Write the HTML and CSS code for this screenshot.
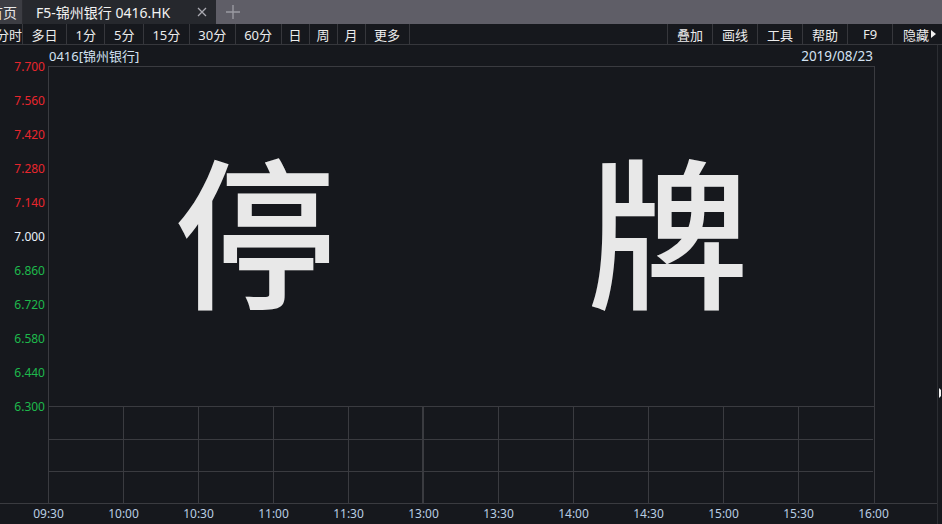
FILE: index.html
```html
<!DOCTYPE html>
<html lang="zh-CN">
<head>
	<meta charset="UTF-8">
	<title>F5-锦州银行 0416.HK</title>
	<link rel="stylesheet" href="styles.css">
</head>
<body>
	<div class="tabbar">
		<div class="tab tab-home">首页</div>
		<div class="tab tab-active">
			<span>F5-锦州银行 0416.HK</span>
			<svg class="close" width="10" height="10" viewBox="0 0 10 10"><path d="M1 1L9 9M9 1L1 9" stroke="#a9a9b0" stroke-width="1.3"/></svg>
		</div>
		<div class="tab-add">
			<svg width="14" height="14" viewBox="0 0 14 14"><path d="M7 0V14M0 7H14" stroke="#9a9aa2" stroke-width="1.4"/></svg>
		</div>
	</div>

	<div class="toolbar">
		<div class="tools">
			<div class="tool tool-cut">分时</div>
			<div class="tool">多日</div>
			<div class="tool">1分</div>
			<div class="tool">5分</div>
			<div class="tool">15分</div>
			<div class="tool">30分</div>
			<div class="tool">60分</div>
			<div class="tool one">日</div>
			<div class="tool one">周</div>
			<div class="tool one">月</div>
			<div class="tool">更多</div>
		</div>
		<div class="tools tools-right">
			<div class="tool">叠加</div>
			<div class="tool">画线</div>
			<div class="tool">工具</div>
			<div class="tool">帮助</div>
			<div class="tool">F9</div>
			<div class="tool tool-hide">隐藏<i class="arrow"></i></div>
		</div>
	</div>

	<div class="main">
		<div class="chart">
			<div class="chart-head">
				<span>0416[锦州银行]</span>
				<span>2019/08/23</span>
			</div>
			<div class="chart-body">
				<div class="yaxis">
					<div class="up">7.700</div>
					<div class="up">7.560</div>
					<div class="up">7.420</div>
					<div class="up">7.280</div>
					<div class="up">7.140</div>
					<div class="flat">7.000</div>
					<div class="down">6.860</div>
					<div class="down">6.720</div>
					<div class="down">6.580</div>
					<div class="down">6.440</div>
					<div class="down">6.300</div>
				</div>
				<div class="plot">
					<div class="price">
						<span>停</span>
						<span>牌</span>
					</div>
					<div class="volume"></div>
				</div>
			</div>
			<div class="times">
				<span>09:30</span>
				<span>10:00</span>
				<span>10:30</span>
				<span>11:00</span>
				<span>11:30</span>
				<span>13:00</span>
				<span>13:30</span>
				<span>14:00</span>
				<span>14:30</span>
				<span>15:00</span>
				<span>15:30</span>
				<span>16:00</span>
			</div>
		</div>
		<div class="strip"><i class="strip-arrow"></i></div>
	</div>
</body>
</html>
```

FILE: styles.css
```css
html{
	font-family: "Noto Sans", "Noto Sans CJK SC", sans-serif;
}
body{
	margin: 0;
	width: 942px;
	height: 524px;
	overflow: hidden;
	background: #16181d;
	color: #e6e6e6;
}

/* tabs */
.tabbar {
	display: flex;
	height: 24px;
	background: #5f5e67;
}
.tab {
	box-sizing: border-box;
	display: flex;
	align-items: center;
	font-size: 14px;
	white-space: nowrap;
	overflow: hidden;
}
.tab-home {
	width: 23px;
	justify-content: flex-end;
	padding-right: 5px;
	background: #3c3d43;
	border-right: 1px solid #2a2b30;
	color: #e8e8e8;
}
.tab-active {
	width: 193px;
	padding-left: 13px;
	background: #26282d;
	color: #f2f2f2;
}
.tab-active .close {
	margin-left: auto;
	margin-right: 9px;
}
.tab-add {
	width: 33px;
	display: flex;
	justify-content: center;
	align-items: center;
}

/* toolbar */
.toolbar {
	display: flex;
	justify-content: space-between;
	height: 20px;
	border-bottom: 1px solid #36373c;
	font-size: 13px;
	color: #ececec;
	padding-right: 5px;
}
.tools {
	display: flex;
}
.tool {
	display: flex;
	align-items: center;
	justify-content: center;
	padding: 0 8.5px;
	border-right: 1px solid #36373c;
	white-space: nowrap;
}
.tool.one {
	padding: 0 7px;
}
.tool-cut {
	width: 22px;
	padding: 0;
	justify-content: flex-end;
	overflow: hidden;
}
.tools-right .tool {
	width: 44px;
	padding: 0;
	border-right: 0;
	border-left: 1px solid #36373c;
}
.tool-hide {
	justify-content: flex-end !important;
}
.arrow {
	width: 0;
	height: 0;
	margin: 0 1px 0 2px;
	border-top: 4px solid transparent;
	border-bottom: 4px solid transparent;
	border-left: 5px solid #f0f0f0;
}

/* chart */
.main {
	display: flex;
	height: 479px;
}
.chart {
	width: 937px;
	display: flex;
	flex-flow: column nowrap;
}
.chart-head {
	height: 21px;
	display: flex;
	justify-content: space-between;
	align-items: center;
	padding: 0 64px 0 49px;
	font-size: 13px;
	color: #d3e2f2;
}
.chart-head span:last-child {
	font-size: 13.5px;
}
.chart-body {
	display: flex;
	height: 437px;
}
.yaxis {
	width: 45px;
	padding-right: 3px;
	margin-top: -16px;
	font-size: 12px;
	text-align: right;
}
.yaxis div {
	height: 34px;
	line-height: 34px;
}
.up { color: #e8262d; }
.flat { color: #e9f1fb; }
.down { color: #1eb84c; }

.plot {
	width: 825px;
	border: 1px solid #3a3b40;
	border-bottom: 0;
	display: flex;
	flex-flow: column nowrap;
}
.price {
	box-sizing: border-box;
	height: 339px;
	padding-bottom: 20px;
	display: flex;
	justify-content: center;
	align-items: center;
	gap: 251px;
	font-family: "Noto Sans CJK SC", sans-serif;
	font-size: 162px;
	font-weight: 500;
	line-height: 1;
	color: #e8e8e8;
}
.volume {
	height: 96px;
	border-top: 1px solid #3a3b40;
	background-image:
		linear-gradient(to right, transparent 373px, #3a3b40 373px, #3a3b40 375px, transparent 375px),
		repeating-linear-gradient(to right, transparent 0, transparent 74px, #3a3b40 74px, #3a3b40 75px),
		linear-gradient(to bottom, transparent 32px, #3a3b40 32px, #3a3b40 33px, transparent 33px, transparent 64px, #3a3b40 64px, #3a3b40 65px, transparent 65px);
	background-size: 824px 100%;
	background-repeat: no-repeat;
}
.times {
	height: 20px;
	border-top: 1px solid #3a3b40;
	display: flex;
	padding-left: 11px;
	font-size: 12px;
	color: #b9cde2;
}
.times span {
	width: 75px;
	text-align: center;
	line-height: 20px;
}

.strip {
	width: 4px;
	border-left: 1px solid #2c2e33;
	background: #17191e;
	padding-top: 343px;
	box-sizing: border-box;
	overflow: hidden;
}
.strip-arrow {
	display: block;
	width: 0;
	height: 0;
	margin-left: 1px;
	border-top: 5px solid transparent;
	border-bottom: 5px solid transparent;
	border-left: 5px solid #f4f4f4;
}
```
